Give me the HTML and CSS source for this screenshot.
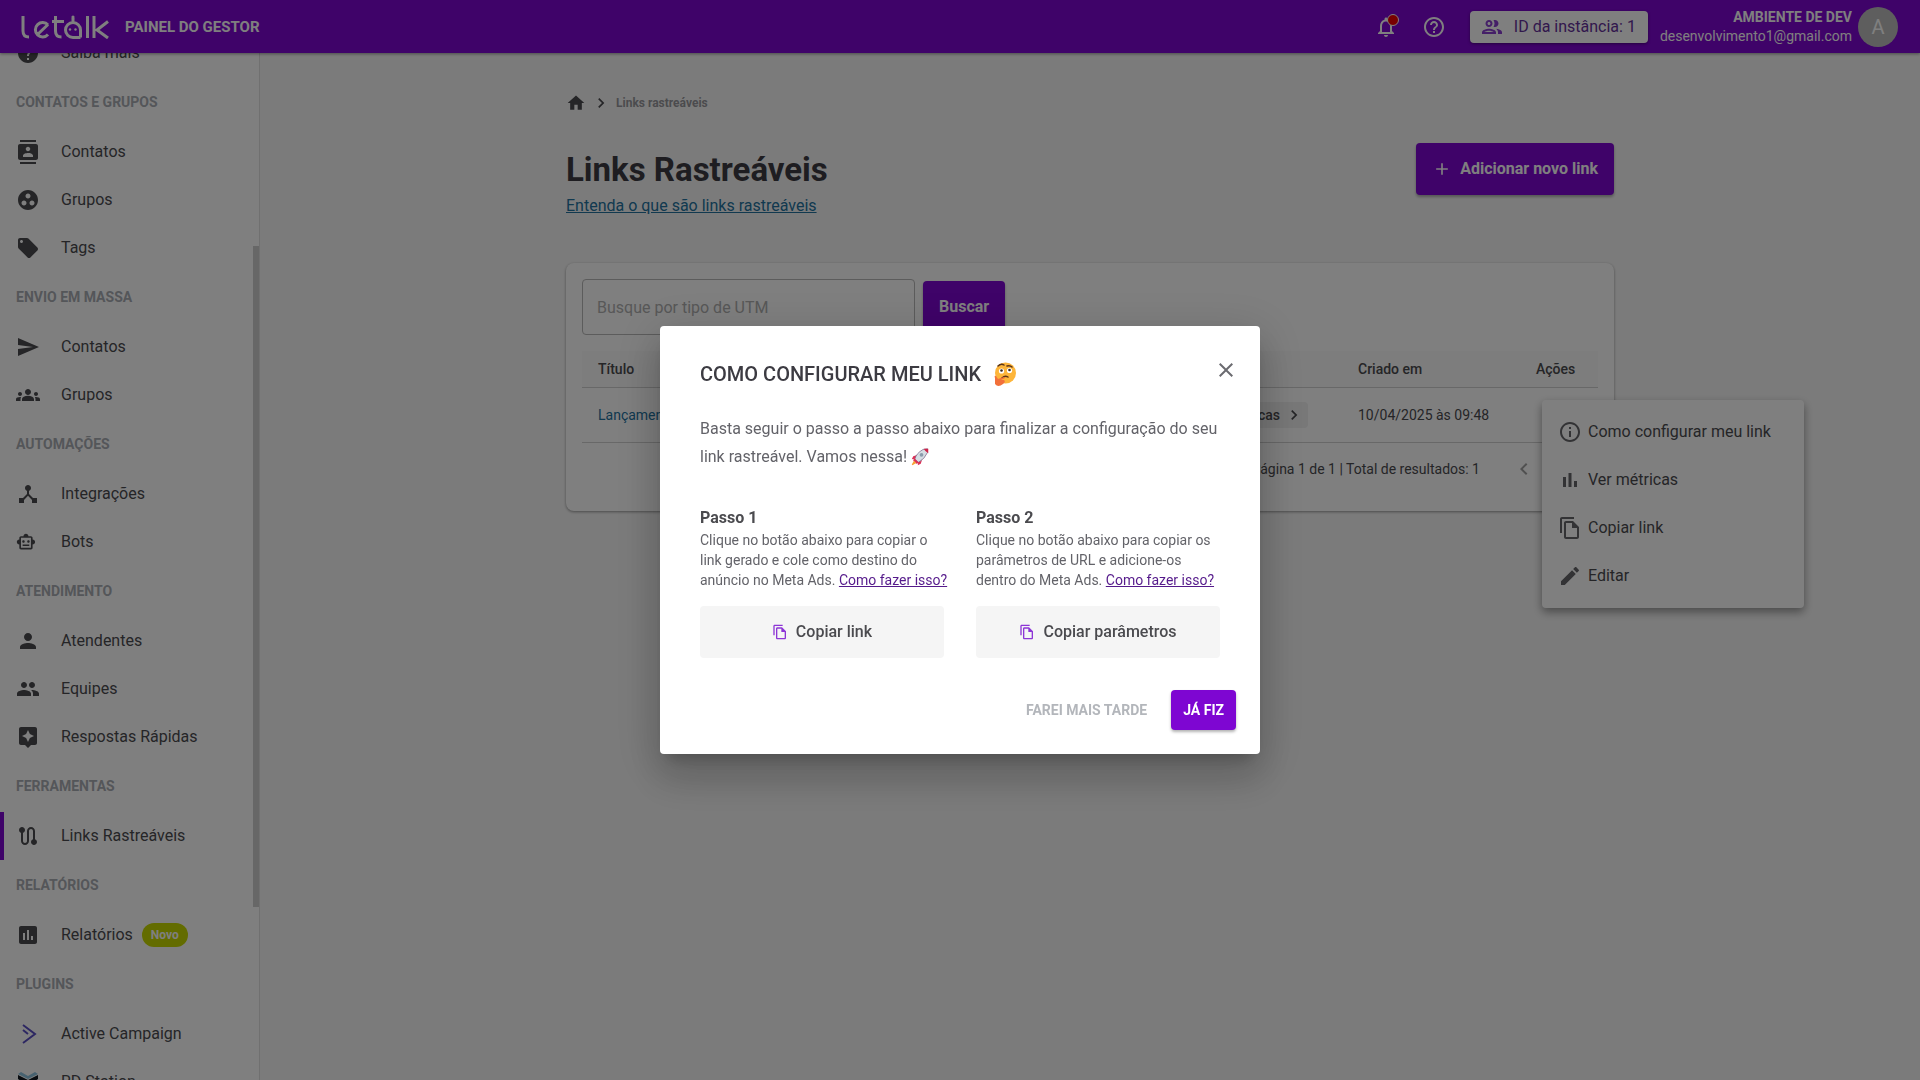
FILE: index.html
```
<!DOCTYPE html>
<html lang="pt-BR">
  <head>
    <meta charset="UTF-8" />
    <meta name="viewport" content="width=device-width, initial-scale=1.0" />
    <title>Links Rastreáveis</title>
    <link rel="stylesheet" href="styles.css">
  </head>
  <body>
    <header class="topbar">
      <svg class="logo" viewBox="0 0 88 24" role="img" aria-label="letalk">
        <path d="M2 1v15q0 6 6 6M16 20L27 9.500M27 10a7.200 7.200 0 1 0 0 9.500M34.500 1v15q0 6 6 6M31 6.500h12M59.500 22.500V15a7.500 7.500 0 1 0-7.500 7.500h7.500M52 7.500V3M66.500 1v22M73 1v22M87 6.500L76 15l11 8" />
        <circle cx="49" cy="14.500" r="1.200" />
        <circle cx="54.500" cy="14.500" r="1.200" />
        <circle cx="52" cy="2" r="1.600" />
      </svg>
      <span class="panel-name">PAINEL DO GESTOR</span>
      <div class="topbar-right">
        <button class="icon-btn bell" aria-label="Notificações">
          <svg class="icon" viewBox="0 0 24 24"><path d="M12 22c1.100 0 2-.9 2-2h-4c0 1.100.9 2 2 2zm6-6v-5c0-3.070-1.630-5.640-4.500-6.320V4c0-.83-.67-1.500-1.500-1.500s-1.500.67-1.500 1.500v.68C7.640 5.360 6 7.920 6 11v5l-2 2v1h16v-1l-2-2zm-2 1H8v-6c0-2.480 1.510-4.500 4-4.500s4 2.020 4 4.500v6z" /></svg>
          <span class="bell-dot"></span>
        </button>
        <button class="icon-btn" aria-label="Ajuda">
          <svg class="icon" viewBox="0 0 24 24"><path d="M11 18h2v-2h-2v2zm1-16C6.480 2 2 6.480 2 12s4.480 10 10 10 10-4.480 10-10S17.520 2 12 2zm0 18c-4.410 0-8-3.590-8-8s3.590-8 8-8 8 3.590 8 8-3.590 8-8 8zm0-14c-2.210 0-4 1.790-4 4h2c0-1.100.9-2 2-2s2 .9 2 2c0 2-3 1.750-3 5h2c0-2.250 3-2.500 3-5 0-2.210-1.790-4-4-4z" /></svg>
        </button>
        <button class="instance">
          <svg class="icon" viewBox="0 0 24 24"><path d="M9 13.750c-2.340 0-7 1.170-7 3.500V19h14v-1.750c0-2.330-4.660-3.500-7-3.500zM4.340 17c.84-.58 2.870-1.250 4.660-1.250s3.820.67 4.660 1.250H4.340zM9 12c1.930 0 3.500-1.570 3.500-3.500S10.930 5 9 5 5.500 6.570 5.500 8.500 7.070 12 9 12zm0-5c.83 0 1.500.67 1.500 1.500S9.830 10 9 10s-1.500-.67-1.500-1.500S8.170 7 9 7zm7.040 6.810c1.160.84 1.960 1.960 1.960 3.440V19h4v-1.750c0-2.020-3.500-3.170-5.960-3.440zM15 12c1.930 0 3.500-1.570 3.500-3.500S16.930 5 15 5c-.54 0-1.040.13-1.500.35.63.89 1 1.980 1 3.150s-.37 2.260-1 3.150c.46.22.96.35 1.500.35z" /></svg>
          ID da instância: 1
        </button>
        <div class="account">
          <strong>AMBIENTE DE DEV</strong>
          <span>desenvolvimento1@gmail.com</span>
        </div>
        <span class="avatar">A</span>
      </div>
    </header>

    <div class="layout">
      <aside class="sidebar">
        <nav class="menu">
          <a class="menu-item" href="#">
            <svg class="icon" viewBox="0 0 24 24"><path d="M12 2C6.480 2 2 6.480 2 12s4.480 10 10 10 10-4.480 10-10S17.520 2 12 2zm1 17h-2v-2h2v2zm2.070-7.750l-.9.920C13.450 12.900 13 13.500 13 15h-2v-.5c0-1.100.45-2.100 1.170-2.830l1.240-1.260c.37-.36.59-.86.59-1.410 0-1.100-.9-2-2-2s-2 .9-2 2H8c0-2.210 1.790-4 4-4s4 1.790 4 4c0 .88-.36 1.680-.93 2.250z" /></svg>
            Saiba mais
          </a>
          <h2 class="menu-title">CONTATOS E GRUPOS</h2>
          <a class="menu-item" href="#">
            <svg class="icon" viewBox="0 0 24 24"><path d="M20 0H4v2h16V0zM4 24h16v-2H4v2zM20 4H4c-1.100 0-2 .9-2 2v12c0 1.100.9 2 2 2h16c1.100 0 2-.9 2-2V6c0-1.100-.9-2-2-2zm-8 2.750c1.240 0 2.250 1.010 2.250 2.250s-1.010 2.250-2.250 2.250S9.750 10.240 9.750 9 10.760 6.750 12 6.750zM17 17H7v-1.500c0-1.670 3.330-2.500 5-2.500s5 .83 5 2.500V17z" /></svg>
            Contatos
          </a>
          <a class="menu-item" href="#">
            <svg class="icon" viewBox="0 0 24 24"><path d="M12 2C6.480 2 2 6.480 2 12s4.480 10 10 10 10-4.480 10-10S17.520 2 12 2zM8 17.500c-1.380 0-2.500-1.120-2.500-2.500s1.120-2.500 2.500-2.500 2.500 1.120 2.500 2.500-1.120 2.500-2.500 2.500zM9.500 8c0-1.380 1.120-2.500 2.500-2.500s2.500 1.120 2.500 2.500-1.120 2.500-2.500 2.500S9.500 9.380 9.500 8zm6.500 9.500c-1.380 0-2.500-1.120-2.500-2.500s1.120-2.500 2.500-2.500 2.500 1.120 2.500 2.500-1.120 2.500-2.500 2.500z" /></svg>
            Grupos
          </a>
          <a class="menu-item" href="#">
            <svg class="icon" viewBox="0 0 24 24"><path d="M21.410 11.580l-9-9C12.050 2.220 11.550 2 11 2H4c-1.100 0-2 .9-2 2v7c0 .55.22 1.050.59 1.420l9 9c.36.36.86.58 1.410.58.55 0 1.050-.22 1.410-.59l7-7c.37-.36.59-.86.59-1.410 0-.55-.23-1.060-.59-1.420zM5.500 7C4.670 7 4 6.330 4 5.500S4.670 4 5.500 4 7 4.670 7 5.500 6.330 7 5.500 7z" /></svg>
            Tags
          </a>
          <h2 class="menu-title">ENVIO EM MASSA</h2>
          <a class="menu-item" href="#">
            <svg class="icon" viewBox="0 0 24 24"><path d="M2.010 21L23 12 2.010 3 2 10l15 2-15 2z" /></svg>
            Contatos
          </a>
          <a class="menu-item" href="#">
            <svg class="icon" viewBox="0 0 24 24"><path d="M12 12.750c1.630 0 3.070.39 4.240.9 1.080.48 1.760 1.560 1.760 2.730V18H6v-1.610c0-1.180.68-2.260 1.760-2.730 1.170-.52 2.610-.91 4.240-.91zM4 13c1.100 0 2-.9 2-2s-.9-2-2-2-2 .9-2 2 .9 2 2 2zm1.130 1.100c-.37-.06-.74-.1-1.130-.1-.99 0-1.930.21-2.780.58C.48 14.900 0 15.620 0 16.430V18h4.500v-1.610c0-.83.23-1.610.63-2.290zM20 13c1.100 0 2-.9 2-2s-.9-2-2-2-2 .9-2 2 .9 2 2 2zm4 3.430c0-.81-.48-1.530-1.220-1.850-.85-.37-1.790-.58-2.780-.58-.39 0-.76.04-1.130.1.4.68.63 1.460.63 2.290V18H24v-1.570zM12 6c1.660 0 3 1.340 3 3s-1.340 3-3 3-3-1.340-3-3 1.340-3 3-3z" /></svg>
            Grupos
          </a>
          <h2 class="menu-title">AUTOMAÇÕES</h2>
          <a class="menu-item" href="#">
            <svg class="icon" viewBox="0 0 24 24"><path d="M17 16l-4-4V8.820C14.160 8.400 15 7.300 15 6c0-1.660-1.340-3-3-3S9 4.340 9 6c0 1.300.84 2.400 2 2.820V12l-4 4H3v5h5v-3.050l4-4.200 4 4.200V21h5v-5h-4z" /></svg>
            Integrações
          </a>
          <a class="menu-item" href="#">
            <svg class="icon" viewBox="0 0 24 24"><g transform="translate(0 2) scale(.83)"><path d="M20 9V7c0-1.100-.9-2-2-2h-3c0-1.660-1.340-3-3-3S9 3.340 9 5H6c-1.100 0-2 .9-2 2v2c-1.660 0-3 1.340-3 3s1.340 3 3 3v4c0 1.100.9 2 2 2h12c1.100 0 2-.9 2-2v-4c1.660 0 3-1.340 3-3s-1.340-3-3-3zm-2 10H6V7h12v12zm-9-6c-.83 0-1.500-.67-1.500-1.500S8.170 10 9 10s1.500.67 1.500 1.500S9.830 13 9 13zm7.500-1.500c0 .83-.67 1.500-1.500 1.500s-1.500-.67-1.500-1.500.67-1.500 1.500-1.500 1.500.67 1.500 1.500zM8 15h8v2H8v-2z" /></g></svg>
            Bots
          </a>
          <h2 class="menu-title">ATENDIMENTO</h2>
          <a class="menu-item" href="#">
            <svg class="icon" viewBox="0 0 24 24"><path d="M12 12c2.210 0 4-1.790 4-4s-1.790-4-4-4-4 1.790-4 4 1.790 4 4 4zm0 2c-2.670 0-8 1.340-8 4v2h16v-2c0-2.660-5.330-4-8-4z" /></svg>
            Atendentes
          </a>
          <a class="menu-item" href="#">
            <svg class="icon" viewBox="0 0 24 24"><path d="M16 11c1.660 0 2.990-1.340 2.990-3S17.660 5 16 5c-1.660 0-3 1.340-3 3s1.340 3 3 3zm-8 0c1.660 0 2.990-1.340 2.990-3S9.660 5 8 5C6.340 5 5 6.340 5 8s1.340 3 3 3zm0 2c-2.330 0-7 1.170-7 3.500V19h14v-2.500c0-2.330-4.670-3.500-7-3.500zm8 0c-.29 0-.62.02-.97.05 1.160.84 1.970 1.970 1.970 3.450V19h6v-2.500c0-2.330-4.670-3.500-7-3.500z" /></svg>
            Equipes
          </a>
          <a class="menu-item" href="#">
            <svg class="icon" viewBox="0 0 24 24"><path d="M19 2H5c-1.110 0-2 .9-2 2v14c0 1.100.89 2 2 2h4l3 3 3-3h4c1.100 0 2-.9 2-2V4c0-1.100-.9-2-2-2zm-5.120 10.880L12 17l-1.880-4.120L6 11l4.120-1.880L12 5l1.880 4.120L18 11l-4.120 1.880z" /></svg>
            Respostas Rápidas
          </a>
          <h2 class="menu-title">FERRAMENTAS</h2>
          <a class="menu-item active" href="#">
            <svg class="icon" viewBox="0 0 24 24"><path d="M19 15.180V7c0-2.210-1.790-4-4-4s-4 1.790-4 4v10c0 1.100-.9 2-2 2s-2-.9-2-2V8.820C8.160 8.400 9 7.300 9 6c0-1.660-1.340-3-3-3S3 4.340 3 6c0 1.300.84 2.400 2 2.820V17c0 2.210 1.790 4 4 4s4-1.790 4-4V7c0-1.100.9-2 2-2s2 .9 2 2v8.180c-1.160.41-2 1.510-2 2.820 0 1.660 1.340 3 3 3s3-1.340 3-3c0-1.300-.84-2.400-2-2.820z" /></svg>
            Links Rastreáveis
          </a>
          <h2 class="menu-title">RELATÓRIOS</h2>
          <a class="menu-item" href="#">
            <svg class="icon" viewBox="0 0 24 24"><path d="M19 3H5c-1.100 0-2 .9-2 2v14c0 1.100.9 2 2 2h14c1.100 0 2-.9 2-2V5c0-1.100-.9-2-2-2zM9 17H7v-7h2v7zm4 0h-2V7h2v10zm4 0h-2v-4h2v4z" /></svg>
            Relatórios
            <span class="badge">Novo</span>
          </a>
          <h2 class="menu-title">PLUGINS</h2>
          <a class="menu-item" href="#">
            <svg class="icon line-icon" viewBox="0 0 24 24"><path d="M7 3l12 9-12 9M7 8l5 4" /></svg>
            Active Campaign
          </a>
          <a class="menu-item" href="#">
            <svg class="icon" viewBox="0 0 24 24"><path fill="#111820" d="M2 5l10 5 10-5v4l-3 2 3 2-10 6-10-6 3-2-3-2z" /><path fill="#8fc4e0" d="M2 4l3-2 7 4 7-4 3 2-10 5z" /></svg>
            RD Station
          </a>
        </nav>
        <span class="scroll-thumb"></span>
      </aside>

      <main class="content">
        <div class="page">
          <nav class="breadcrumb" aria-label="Caminho">
            <a href="#" aria-label="Início"><svg class="icon icon-md" viewBox="0 0 24 24"><path d="M10 20v-6h4v6h5v-8h3L12 3 2 12h3v8z" /></svg></a>
            <svg class="icon icon-md" viewBox="0 0 24 24"><path d="M10 6L8.590 7.410 13.170 12l-4.580 4.590L10 18l6-6z" /></svg>
            <span>Links rastreáveis</span>
          </nav>

          <div class="page-head">
            <div>
              <h1>Links Rastreáveis</h1>
              <a class="help-link" href="#">Entenda o que são links rastreáveis</a>
            </div>
            <button class="btn btn-add">
              <svg class="icon icon-md" viewBox="0 0 24 24"><path d="M19 13h-6v6h-2v-6H5v-2h6V5h2v6h6v2z" /></svg>
              Adicionar novo link
            </button>
          </div>

          <section class="card">
            <form class="search">
              <input type="text" placeholder="Busque por tipo de UTM" aria-label="Busque por tipo de UTM" />
              <button type="button" class="btn">Buscar</button>
            </form>
            <table>
              <thead>
                <tr>
                  <th class="col-title">Título</th>
                  <th class="col-metrics"></th>
                  <th class="col-date">Criado em</th>
                  <th>Ações</th>
                </tr>
              </thead>
              <tbody>
                <tr>
                  <td><a href="#">Lançamento</a></td>
                  <td class="col-metrics">
                    <button class="metrics">
                      Métricas
                      <svg class="icon icon-md" viewBox="0 0 24 24"><path d="M10 6L8.590 7.410 13.170 12l-4.580 4.590L10 18l6-6z" /></svg>
                    </button>
                  </td>
                  <td>10/04/2025 às 09:48</td>
                  <td></td>
                </tr>
              </tbody>
            </table>
            <div class="pagination">
              <span>Página 1 de 1 | Total de resultados: 1</span>
              <button class="icon-btn" disabled aria-label="Página anterior">
                <svg class="icon" viewBox="0 0 24 24"><path d="M15.410 7.410L14 6l-6 6 6 6 1.410-1.410L10.830 12z" /></svg>
              </button>
            </div>

            <div class="actions-menu" role="menu">
              <button role="menuitem">
                <svg class="icon" viewBox="0 0 24 24"><path d="M11 7h2v2h-2zm0 4h2v6h-2zm1-9C6.480 2 2 6.480 2 12s4.480 10 10 10 10-4.480 10-10S17.520 2 12 2zm0 18c-4.410 0-8-3.590-8-8s3.590-8 8-8 8 3.590 8 8-3.590 8-8 8z" /></svg>
                Como configurar meu link
              </button>
              <button role="menuitem">
                <svg class="icon" viewBox="0 0 24 24"><path d="M5 9h3v10H5zM10.500 5h3v14h-3zM16 13h3v6h-3z" /></svg>
                Ver métricas
              </button>
              <button role="menuitem">
                <svg class="icon" viewBox="0 0 24 24"><path d="M16 1H4c-1.100 0-2 .9-2 2v14h2V3h12V1zm-1 4H8c-1.100 0-1.990.9-1.990 2L6 21c0 1.100.89 2 1.990 2H19c1.100 0 2-.9 2-2V11l-6-6zM8 21V7h6v5h5v9H8z" /></svg>
                Copiar link
              </button>
              <button role="menuitem">
                <svg class="icon" viewBox="0 0 24 24"><path d="M3 17.250V21h3.750L17.810 9.940l-3.750-3.750L3 17.250zM20.710 7.040c.39-.39.39-1.020 0-1.410l-2.340-2.340c-.39-.39-1.020-.39-1.410 0l-1.830 1.830 3.750 3.750 1.830-1.830z" /></svg>
                Editar
              </button>
            </div>
          </section>
        </div>
      </main>
    </div>

    <div class="modal-overlay">
      <div class="modal-window" role="dialog" aria-modal="true" aria-labelledby="modal-title">
        <button class="modal-close" aria-label="Fechar">
          <svg class="icon" viewBox="0 0 24 24"><path d="M19 6.410L17.590 5 12 10.590 6.410 5 5 6.410 10.590 12 5 17.590 6.410 19 12 13.410 17.590 19 19 17.590 13.410 12z" /></svg>
        </button>
        <h2 id="modal-title">
          COMO CONFIGURAR MEU LINK
          <svg class="emoji" viewBox="0 0 24 24" role="img" aria-label="pensativo">
            <circle cx="12.500" cy="11" r="10.500" fill="#fdb53a" />
            <circle cx="8.500" cy="9" r="2.600" fill="#fff" />
            <circle cx="16.500" cy="8.500" r="2.600" fill="#fff" />
            <circle cx="8.500" cy="8.500" r="1.300" fill="#3b2a20" />
            <circle cx="16.500" cy="8" r="1.300" fill="#3b2a20" />
            <path d="M5 4q3-3 6-1M14 4q3-1 5 1M9 16q3-3 6-1" fill="none" stroke="#5b3418" stroke-width="1.500" stroke-linecap="round" />
            <path d="M2 16q-1-3 1-2l2 3 6-2q2 0 1 1l-4 2h3q2 2-1 4-5 4-8 0z" fill="#f2703a" />
          </svg>
        </h2>
        <p class="modal-text">
          Basta seguir o passo a passo abaixo para finalizar a configuração do seu
          link rastreável. Vamos nessa!
          <svg class="emoji rocket" viewBox="0 0 24 24" role="img" aria-label="foguete">
            <path d="M9 9L3 11l-2 4 6-1zM15 15l-2 6-4 2 1-6z" fill="#dc2f55" />
            <path d="M5 15q2-8 11-13l6-1v5q-4 9-12 13z" fill="#d5dde3" stroke="#7d6b8c" />
            <path d="M17 1l6 0v6q-4-2-6-6z" fill="#cf2348" />
            <circle cx="14" cy="9" r="2.500" fill="#8a9bab" />
            <path d="M4 13l7 7-4 1-4-4z" fill="#dc2f55" />
            <path d="M4 17l3 3-5 3-1-1z" fill="#f7a234" />
          </svg>
        </p>
        <div class="steps">
          <section class="step">
            <h3>Passo 1</h3>
            <p>Clique no botão abaixo para copiar o link gerado e cole como destino do anúncio no Meta Ads. <a href="#">Como fazer isso?</a></p>
            <button class="btn-copy">
              <svg class="icon icon-sm" viewBox="0 0 24 24"><path d="M16 1H4c-1.100 0-2 .9-2 2v14h2V3h12V1zm-1 4H8c-1.100 0-1.990.9-1.990 2L6 21c0 1.100.89 2 1.990 2H19c1.100 0 2-.9 2-2V11l-6-6zM8 21V7h6v5h5v9H8z" /></svg>
              Copiar link
            </button>
          </section>
          <section class="step">
            <h3>Passo 2</h3>
            <p>Clique no botão abaixo para copiar os parâmetros de URL e adicione-os<br />dentro do Meta Ads. <a href="#">Como fazer isso?</a></p>
            <button class="btn-copy">
              <svg class="icon icon-sm" viewBox="0 0 24 24"><path d="M16 1H4c-1.100 0-2 .9-2 2v14h2V3h12V1zm-1 4H8c-1.100 0-1.990.9-1.990 2L6 21c0 1.100.89 2 1.990 2H19c1.100 0 2-.9 2-2V11l-6-6zM8 21V7h6v5h5v9H8z" /></svg>
              Copiar parâmetros
            </button>
          </section>
        </div>
        <div class="modal-actions">
          <button class="btn-later">FAREI MAIS TARDE</button>
          <button class="btn btn-done">JÁ FIZ</button>
        </div>
      </div>
    </div>
  </body>
</html>
```
FILE: styles.css
```
* {
  box-sizing: border-box;
}
body {
  margin: 0;
  height: 100vh;
  display: flex;
  flex-direction: column;
  overflow: hidden;
  font-family: Roboto, "Noto Sans", sans-serif;
  font-size: 16px;
  line-height: 24px;
  color: #4b4b4f;
  background: #f7f7f7;
}
h1,
h2,
h3,
p {
  margin: 0;
}
button,
input {
  font: inherit;
  color: inherit;
}
button {
  border: 0;
  padding: 0;
  background: none;
  cursor: pointer;
}
.icon {
  width: 24px;
  height: 24px;
  flex: none;
  display: block;
  fill: currentColor;
}
.icon-md {
  width: 20px;
  height: 20px;
}
.icon-sm {
  width: 16px;
  height: 16px;
}

/* top bar */
.topbar {
  display: flex;
  align-items: center;
  gap: 16px;
  height: 53px;
  flex: none;
  padding: 0 22px 0 21px;
  background: #7e06d2;
  color: #fff;
  box-shadow: 0 1px 3px rgba(0, 0, 0, 0.4);
  z-index: 1;
}
.logo {
  width: 88px;
  height: 24px;
  fill: #fff;
}
.logo path {
  fill: none;
  stroke: #fff;
  stroke-width: 3;
}
.panel-name {
  font-size: 15px;
  font-weight: 700;
}
.topbar-right {
  display: flex;
  align-items: center;
  gap: 24px;
  margin-left: auto;
}
.icon-btn {
  position: relative;
}
.bell-dot {
  position: absolute;
  top: -1px;
  right: -1px;
  width: 12px;
  height: 12px;
  border: 1px solid #fff;
  border-radius: 50%;
  background: #f00000;
}
.instance {
  display: flex;
  align-items: center;
  gap: 10px;
  height: 32px;
  padding: 0 12px 0 10px;
  border-radius: 4px;
  background: #fff;
  color: #64309a;
  box-shadow: 0 1px 3px rgba(0, 0, 0, 0.4);
}
.instance .icon {
  color: #8a3fd0;
}
.account {
  display: flex;
  flex-direction: column;
  align-items: flex-end;
  margin: 0 -18px 0 -12px;
  font-size: 14px;
  line-height: 19px;
}
.avatar {
  width: 40px;
  height: 40px;
  border-radius: 50%;
  background: #bdbdbd;
  font-size: 20px;
  line-height: 40px;
  text-align: center;
}

/* sidebar */
.layout {
  display: flex;
  flex: 1;
  min-height: 0;
}
.sidebar {
  position: relative;
  width: 260px;
  flex: none;
  overflow: hidden;
  background: #fff;
  border-right: 1px solid #e0e0e0;
}
/* list is scrolled down a little */
.menu {
  margin-top: -24px;
}
.menu-title {
  padding-left: 16px;
  font-size: 14px;
  font-weight: 700;
  line-height: 51px;
  color: #a9acb3;
}
.menu-item {
  display: flex;
  align-items: center;
  gap: 21px;
  height: 48px;
  padding-left: 16px;
  color: #4b4b4f;
  text-decoration: none;
}
.menu-item.active {
  padding-left: 12px;
  border-left: 4px solid #7e06d2;
}
.line-icon {
  fill: none;
  stroke: #5a4fc4;
  stroke-width: 2;
}
.badge {
  margin-left: -12px;
  padding: 0 9px;
  border-radius: 12px;
  background: #c6d800;
  color: #fff;
  font-size: 12px;
  font-weight: 700;
}
.scroll-thumb {
  position: absolute;
  top: 193px;
  right: 0;
  width: 6px;
  height: 661px;
  background: #cfcfcf;
}

/* page */
.content {
  flex: 1;
  min-width: 0;
  padding: 38px 24px;
}
.page {
  max-width: 1048px;
  margin: 0 auto;
}
.breadcrumb {
  display: flex;
  align-items: center;
  gap: 5px;
  font-size: 12px;
  font-weight: 700;
  color: #97979c;
}
.breadcrumb a,
.breadcrumb .icon {
  color: #4b4b4f;
}
.page-head {
  display: flex;
  justify-content: space-between;
  align-items: flex-start;
  margin: 28px 0 47px;
}
h1 {
  font-size: 33px;
  line-height: 53px;
  color: #3c3b42;
}
.help-link {
  display: block;
  line-height: 20px;
  color: #23729f;
}
.btn {
  display: flex;
  align-items: center;
  justify-content: center;
  gap: 8px;
  height: 52px;
  padding: 0 16px;
  border-radius: 4px;
  background: #7e06d2;
  color: #fff;
  font-weight: 700;
  box-shadow: 0 2px 3px rgba(0, 0, 0, 0.3);
}

.card {
  position: relative;
  padding: 16px;
  border-radius: 8px;
  background: #fff;
  box-shadow: 0 1px 3px rgba(0, 0, 0, 0.4);
}
.search {
  display: flex;
  align-items: center;
  gap: 8px;
}
.search input {
  width: 333px;
  height: 56px;
  padding: 0 14px;
  border: 1px solid #b8b8b8;
  border-radius: 4px;
  background: #fff;
}
.search input::placeholder {
  color: #b0b0b0;
}
table {
  width: 100%;
  margin-top: 16px;
  border-collapse: collapse;
  table-layout: fixed;
  font-size: 14px;
}
th,
td {
  padding: 0 16px;
  text-align: left;
  border-bottom: 1px solid #d0d0d0;
}
th {
  height: 36px;
  font-weight: 500;
  background: #fafafa;
}
td {
  height: 55px;
}
td a {
  color: #23729f;
  text-decoration: none;
}
.col-title {
  width: 460px;
}
.col-metrics {
  width: 300px;
}
.col-date {
  width: 178px;
}
td.col-metrics {
  padding-right: 34px;
}
.metrics {
  display: flex;
  align-items: center;
  gap: 4px;
  height: 26px;
  margin-left: auto;
  padding: 0 4px 0 12px;
  border-radius: 4px;
  background: #f0f0f0;
  font-weight: 500;
}
.pagination {
  display: flex;
  align-items: center;
  justify-content: flex-end;
  gap: 32px;
  height: 52px;
  padding-right: 62px;
  font-size: 14px;
}
.pagination .icon-btn {
  color: #a0a0a0;
}

.actions-menu {
  position: absolute;
  top: 137px;
  left: 976px;
  width: 262px;
  padding: 8px 0;
  border-radius: 4px;
  background: #fff;
  box-shadow: 0 4px 10px rgba(0, 0, 0, 0.4);
}
.actions-menu button {
  display: flex;
  align-items: center;
  gap: 6px;
  width: 100%;
  height: 48px;
  padding: 0 16px;
}
.actions-menu .icon {
  color: #66666a;
}

/* modal */
.modal-overlay {
  position: fixed;
  inset: 0;
  z-index: 10;
  display: flex;
  align-items: center;
  justify-content: center;
  background: rgba(0, 0, 0, 0.5);
}
.modal-window {
  position: relative;
  width: 600px;
  padding: 34px 24px 24px 40px;
  border-radius: 4px;
  background: #fff;
  box-shadow: 0 11px 15px -7px rgba(0, 0, 0, 0.2), 0 24px 38px 3px rgba(0, 0, 0, 0.14), 0 9px 46px 8px rgba(0, 0, 0, 0.12);
}
.modal-close {
  position: absolute;
  top: 32px;
  right: 22px;
  color: #6b6b70;
}
.modal-window h2 {
  display: flex;
  align-items: center;
  gap: 12px;
  font-size: 20px;
  font-weight: 500;
  line-height: 28px;
  color: #3c3b42;
}
.emoji {
  width: 24px;
  height: 24px;
}
.rocket {
  width: 18px;
  height: 18px;
  vertical-align: -4px;
}
.modal-text {
  margin: 27px 16px 35px 0;
  line-height: 28px;
  color: #636369;
}
.steps {
  display: grid;
  grid-template-columns: 1fr 1fr;
  gap: 32px;
  padding-right: 16px;
}
.step h3 {
  font-size: 16px;
  line-height: 24px;
}
.step p {
  margin-right: -6px;
  font-size: 14px;
  line-height: 20px;
  color: #636369;
}
.step a {
  color: #551a8b;
}
.btn-copy {
  display: flex;
  align-items: center;
  justify-content: center;
  gap: 8px;
  width: 100%;
  height: 52px;
  margin-top: 16px;
  border-radius: 4px;
  background: #f5f5f5;
  font-weight: 500;
}
.btn-copy .icon {
  color: #8d35d6;
}
.modal-actions {
  display: flex;
  align-items: center;
  justify-content: flex-end;
  gap: 24px;
  margin-top: 32px;
  font-size: 14px;
}
.btn-later {
  color: #b3b6bb;
  font-weight: 700;
}
.btn-done {
  height: 40px;
  padding: 0 12px;
}
```
